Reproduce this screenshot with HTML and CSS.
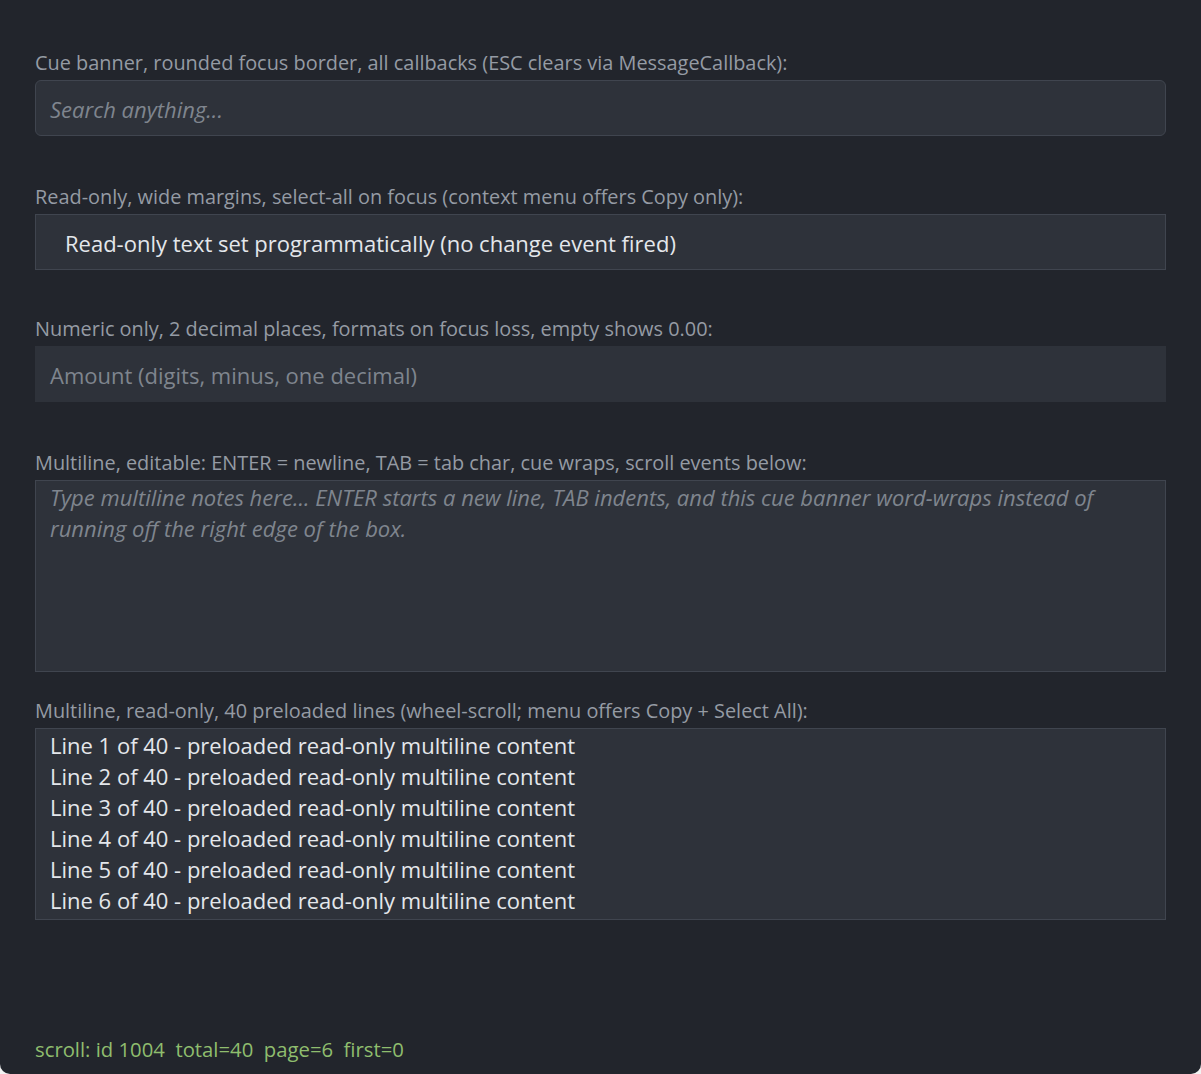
FILE: index.html
```html
<!DOCTYPE html>
<html lang="en">
<head>
    <meta charset="UTF-8">
    <meta name="viewport" content="width=device-width, initial-scale=1.0">
    <title>Edit Controls Demo</title>
    <link rel="stylesheet" href="styles.css">
</head>
<body>
    <div class="window">
        <div class="field">
            <div class="label">Cue banner, rounded focus border, all callbacks (ESC clears via MessageCallback):</div>
            <div class="edit rounded cue">Search anything...</div>
        </div>

        <div class="field short">
            <div class="label">Read-only, wide margins, select-all on focus (context menu offers Copy only):</div>
            <div class="edit wide">Read-only text set programmatically (no change event fired)</div>
        </div>

        <div class="field">
            <div class="label">Numeric only, 2 decimal places, formats on focus loss, empty shows 0.00:</div>
            <div class="edit flat hint">Amount (digits, minus, one decimal)</div>
        </div>

        <div class="field tight">
            <div class="label">Multiline, editable: ENTER = newline, TAB = tab char, cue wraps, scroll events below:</div>
            <div class="edit multi cue">Type multiline notes here... ENTER starts a new line, TAB indents, and this cue banner word-wraps instead of running off the right edge of the box.</div>
        </div>

        <div class="field">
            <div class="label">Multiline, read-only, 40 preloaded lines (wheel-scroll; menu offers Copy + Select All):</div>
            <div class="edit multi lines" id="lines"></div>
        </div>

        <div class="status">scroll: id 1004&nbsp; total=40&nbsp; page=6&nbsp; first=0</div>
    </div>

    <script>
        // fill the read-only box with the preloaded lines
        const lines = document.getElementById('lines');
        for (let i = 1; i <= 6; i++) {
            const row = document.createElement('div');
            row.textContent = 'Line ' + i + ' of 40 - preloaded read-only multiline content';
            lines.appendChild(row);
        }
    </script>
</body>
</html>
```

FILE: styles.css
```css
html {
    background: #f2f2f2;
}

body {
    margin: 0;
    font-family: 'Open Sans', 'Noto Sans', sans-serif;
}

.window {
    box-sizing: border-box;
    height: 1074px;
    padding: 50px 35px 0 35px;
    background-color: #22252c;
    border-radius: 0 0 10px 10px;
    display: flex;
    flex-direction: column;
}

.field {
    margin-bottom: 48px;
}

.field.short {
    margin-bottom: 46px;
}

.field.tight {
    margin-bottom: 26px;
}

.label {
    font-size: 19.9px;
    line-height: 24px;
    padding-top: 1px;
    color: #959ba4;
    margin-bottom: 5px;
    white-space: nowrap;
}

.edit {
    box-sizing: border-box;
    height: 56px;
    padding: 0 14px;
    background-color: #2e323a;
    border: 1px solid #40454f;
    font-size: 22px;
    line-height: 56px;
    color: #e4e7eb;
    white-space: nowrap;
}

.edit.rounded {
    border-radius: 6px;
}

.edit.cue {
    font-style: italic;
    color: #7f858e;
}

.edit.wide {
    padding-left: 29px;
}

.edit.flat {
    border-color: #2e323a;
}

.edit.hint {
    color: #7f858e;
}

.edit.multi {
    height: 192px;
    padding-top: 1px;
    line-height: 31px;
    white-space: normal;
}

.status {
    margin-top: auto;
    margin-bottom: 13px;
    font-size: 20.3px;
    line-height: 24px;
    color: #8fbd6e;
}
```
